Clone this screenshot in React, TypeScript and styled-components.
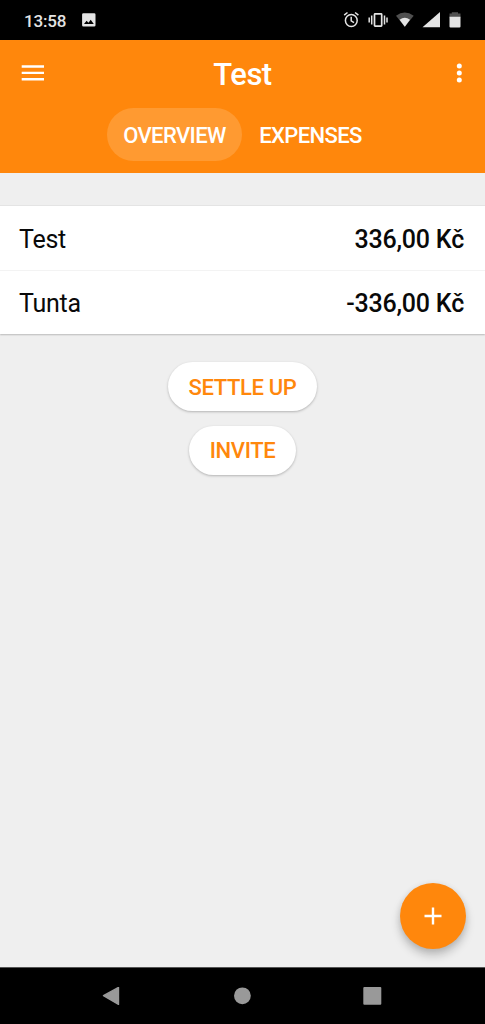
import React from "react";
import styled, { createGlobalStyle } from "styled-components";

const ORANGE = "#ff870c";

const GlobalStyle = createGlobalStyle`
  * { box-sizing: border-box; }
  body { margin: 0; background: #efefef; font-family: Roboto, "Liberation Sans", sans-serif; }
  svg { display: block; }
  button { border: 0; padding: 0; font: inherit; }
`;

const Screen = styled.div`
  width: 485px;
  height: 1024px;
  display: flex;
  flex-direction: column;
  background: #efefef;
  overflow: hidden;
`;

const StatusBar = styled.div`
  height: 40px;
  flex: none;
  display: flex;
  align-items: center;
  justify-content: space-between;
  background: #000;
  color: #e4e4e4;
  padding: 0 23px 0 24px;
`;

const StatusLeft = styled.div`
  display: flex;
  align-items: center;
  gap: 14.5px;
`;

const Clock = styled.span`
  width: 43px;
  font-size: 17px;
  font-weight: 500;
  letter-spacing: -0.2px;
  line-height: 20px;
  padding-top: 1px;
  white-space: nowrap;
`;

const Header = styled.header`
  height: 133px;
  flex: none;
  background: ${ORANGE};
  color: #fff;
`;

const TitleRow = styled.div`
  height: 68px;
  display: flex;
  align-items: center;
  padding: 0 18px 0 20px;
`;

const IconButton = styled.button<{ $width: number }>`
  width: ${(p) => p.$width}px;
  height: 32px;
  flex: none;
  background: none;
  color: inherit;
  margin-bottom: 2px;
`;

const Title = styled.h1`
  flex: 1;
  margin: 1px 0 0;
  padding-right: 12px;
  text-align: center;
  font-size: 31px;
  font-weight: 500;
  letter-spacing: -0.5px;
  line-height: 36px;
`;

const Tabs = styled.nav`
  display: flex;
  padding-left: 107px;
`;

const Tab = styled.button<{ $active?: boolean }>`
  height: 53px;
  padding: 2px 0 0;
  width: ${(p) => (p.$active ? 135 : 137)}px;
  border-radius: 27px;
  background: ${(p) => (p.$active ? "#ff9a31" : "transparent")};
  color: #fff;
  font-size: 22px;
  font-weight: 500;
  letter-spacing: -0.6px;
  white-space: nowrap;
`;

const Content = styled.main`
  flex: 1;
  display: flex;
  flex-direction: column;
  padding-top: 33px;
`;

const Members = styled.section`
  height: 128px;
  background: #fff;
  box-shadow: 0 1px 1.5px rgba(0, 0, 0, 0.22), 0 -1px 0 rgba(0, 0, 0, 0.04);
`;

const MemberRow = styled.div`
  height: 64px;
  display: flex;
  align-items: center;
  justify-content: space-between;
  padding: 3px 21px 0 19px;
  font-size: 25px;
  letter-spacing: -0.25px;
  line-height: 30px;
  color: #090909;
  & + & {
    border-top: 1px solid #f3f3f3;
  }
`;

const Amount = styled.span`
  font-weight: 500;
  letter-spacing: -0.2px;
`;

const Actions = styled.div`
  display: flex;
  flex-direction: column;
  align-items: center;
  gap: 14.5px;
  padding-top: 28px;
`;

const ActionButton = styled.button<{ $width: number }>`
  width: ${(p) => p.$width}px;
  height: 49px;
  padding-top: 2px;
  border-radius: 25px;
  background: #fff;
  color: ${ORANGE};
  font-size: 22px;
  font-weight: 500;
  letter-spacing: -0.35px;
  white-space: nowrap;
  box-shadow: 0 1px 2.5px rgba(0, 0, 0, 0.25);
  & + & {
    padding-top: 1px;
  }
`;

const AddButton = styled.button`
  width: 66px;
  height: 66px;
  margin: auto 19px 18.5px auto;
  display: flex;
  align-items: center;
  justify-content: center;
  border-radius: 50%;
  background: ${ORANGE};
  box-shadow: 0 6px 10px rgba(0, 0, 0, 0.22), 0 1px 6px rgba(0, 0, 0, 0.08);
`;

const NavBar = styled.footer`
  height: 57px;
  flex: none;
  background: #000;
  border-top: 1px solid #555;
  padding: 19px 102px 0;
  display: flex;
  justify-content: space-between;
`;

const members = [
  { name: "Test", balance: "336,00 Kč" },
  { name: "Tunta", balance: "-336,00 Kč" },
];

const PictureIcon = () => (
  <svg width="14" height="14" viewBox="0 0 14 14">
    <path
      fill="#e4e4e4"
      fillRule="evenodd"
      d="M1.4.2h10.8q1.3 0 1.3 1.3v10.7q0 1.3-1.3 1.3H1.4Q.1 13.5.1 12.2V1.5Q.1.2 1.4.2ZM2 11h9.8L8.7 6.8 6.5 9.7 4.6 7.7Z"
    />
  </svg>
);

const StatusIcons = () => (
  <svg width="119" height="20" viewBox="343 10 119 20" fill="#e4e4e4">
    <g fill="none" stroke="#e4e4e4" strokeWidth="1.5">
      <circle cx="351.3" cy="20.5" r="5.9" />
      <path d="M351.2 16.8V20.9L354 22.6M344.2 15.2L347.5 12.5M355.1 12.5L358.4 15.2" />
      <rect x="374.5" y="13.8" width="7.2" height="12.3" rx=".6" strokeWidth="1.7" />
      <path d="M371.7 15.5V24.5M369.2 17.5V22.5M384.5 15.5V24.5M387 17.5V22.5" />
    </g>
    <path fill="#505050" d="M396 15.8Q404.7 9 413.7 15.8L404.8 26.8Z" />
    <path d="M399.6 19.8Q404.8 15.8 410 19.8L404.8 26.8Z" />
    <path d="M422.5 27.3H440V12Z" />
    <path fill="#505050" d="M451.8 12.2h6.2v1.3h2.5v4h-11v-4h2.3Z" />
    <path d="M449.5 16.7h11v9.8q0 1-1 1h-9q-1 0-1-1Z" />
  </svg>
);

const MenuIcon = () => (
  <svg width="26" height="32" viewBox="0 0 26 32">
    <path d="M1.7 9.5H24M1.7 15.9H24M1.7 22.3H24" stroke="#fff" strokeWidth="2.4" />
  </svg>
);

const MoreIcon = () => (
  <svg width="16" height="32" viewBox="0 0 16 32" fill="#fff">
    <circle cx="8.3" cy="8.9" r="2.5" />
    <circle cx="8.3" cy="16" r="2.5" />
    <circle cx="8.3" cy="23.1" r="2.5" />
  </svg>
);

export default function App() {
  return (
    <>
      <GlobalStyle />
      <Screen>
        <StatusBar>
          <StatusLeft>
            <Clock>13:58</Clock>
            <PictureIcon />
          </StatusLeft>
          <StatusIcons />
        </StatusBar>
        <Header>
          <TitleRow>
            <IconButton $width={26} aria-label="Menu"><MenuIcon /></IconButton>
            <Title>Test</Title>
            <IconButton $width={16} aria-label="More"><MoreIcon /></IconButton>
          </TitleRow>
          <Tabs>
            <Tab $active>OVERVIEW</Tab>
            <Tab>EXPENSES</Tab>
          </Tabs>
        </Header>
        <Content>
          <Members>
            {members.map((m) => (
              <MemberRow key={m.name}>
                <span>{m.name}</span>
                <Amount>{m.balance}</Amount>
              </MemberRow>
            ))}
          </Members>
          <Actions>
            <ActionButton $width={149}>SETTLE UP</ActionButton>
            <ActionButton $width={107}>INVITE</ActionButton>
          </Actions>
          <AddButton aria-label="Add">
            <svg width="18" height="18" viewBox="0 0 18 18">
              <path d="M9 .5V17.5M.5 9H17.5" stroke="#fff" strokeWidth="2.4" />
            </svg>
          </AddButton>
        </Content>
        <NavBar>
          <svg width="18" height="20" viewBox="0 0 18 20">
            <path d="M1.5 8.7L16.5.4V17.4Z" fill="#999" stroke="#999" strokeWidth="1.4" strokeLinejoin="round" />
          </svg>
          <svg width="18" height="20" viewBox="0 0 18 20">
            <circle cx="9.4" cy="8.8" r="8.4" fill="#999" />
          </svg>
          <svg width="20" height="20" viewBox="0 0 20 20">
            <rect x=".3" y="0" width="18" height="17.8" rx="1" fill="#999" />
          </svg>
        </NavBar>
      </Screen>
    </>
  );
}
